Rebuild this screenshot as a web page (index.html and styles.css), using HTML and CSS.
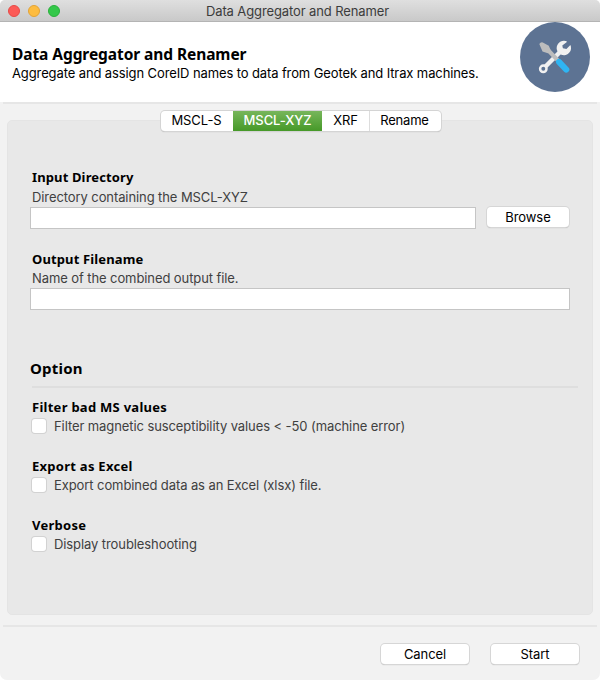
FILE: index.html
```html
<!DOCTYPE html>
<html lang="en">
<head>
<meta charset="utf-8">
<title>Data Aggregator and Renamer</title>
<link rel="stylesheet" href="styles.css">
</head>
<body>
<div class="window">
  <div class="titlebar">
    <div class="lights"><i class="light red"></i><i class="light yellow"></i><i class="light green"></i></div>
    <span class="window-title">Data Aggregator and Renamer</span>
  </div>
  <header class="header">
    <div class="header-text">
      <h1>Data Aggregator and Renamer</h1>
      <p class="subtitle">Aggregate and assign CoreID names to data from Geotek and Itrax machines.</p>
    </div>
    <svg class="logo" width="70" height="70" viewBox="0 0 70 70">
      <circle cx="35" cy="35" r="35" fill="#5d7393"/>
      <path d="M25 45L43 27" stroke="#f1f1f1" stroke-width="4.4"/>
      <circle cx="23.3" cy="46.8" r="3.2" fill="none" stroke="#f1f1f1" stroke-width="2.5"/>
      <path d="M47.2 19.7A7.2 7.2 0 1 0 50.4 23.1L46.4 27.1L42.9 26.2L42.3 23.5Z" fill="#f1f1f1"/>
      <path d="M27 27L38 38.5" stroke="#bdbdbd" stroke-width="4"/>
      <path d="M19.3 22Q20.5 19.8 22.8 20.4L28.8 23.8L30.8 28.4L27.8 31.2L22.5 29.6Z" fill="#bdbdbd"/>
      <path d="M39.2 40.2L46.3 47.6" stroke="#2fb5f3" stroke-width="6" stroke-linecap="round"/>
      <path d="M35.8 39L38.4 36.4L41.6 38.2L37.5 42.2Z" fill="#2fb5f3"/>
    </svg>
  </header>
  <div class="rule"></div>
  <main class="content">
    <nav class="tabs">
      <div class="tab t1">MSCL-S</div><div class="tab t2 active">MSCL-XYZ</div><div class="tab t3">XRF</div><div class="tab t4">Rename</div>
    </nav>
    <section class="panel">
      <div class="field">
        <h3>Input Directory</h3>
        <p>Directory containing the MSCL-XYZ</p>
        <div class="row"><input class="text" type="text"><button class="browse">Browse</button></div>
      </div>
      <div class="field output">
        <h3>Output Filename</h3>
        <p>Name of the combined output file.</p>
        <div class="row"><input class="text" type="text"></div>
      </div>
      <h2>Option</h2>
      <hr>
      <div class="option">
        <h3 class="wide">Filter bad MS values</h3>
        <label><i class="check"></i><span>Filter magnetic susceptibility values &lt; -50 (machine error)</span></label>
      </div>
      <div class="option">
        <h3 class="wide">Export as Excel</h3>
        <label><i class="check"></i><span>Export combined data as an Excel (xlsx) file.</span></label>
      </div>
      <div class="option">
        <h3 class="wide">Verbose</h3>
        <label><i class="check"></i><span>Display troubleshooting</span></label>
      </div>
    </section>
  </main>
  <div class="rule"></div>
  <footer class="footer"><button>Cancel</button><button>Start</button></footer>
</div>
</body>
</html>
```
FILE: styles.css
```css
* { box-sizing: border-box; }
body { margin: 0; background: #fff; font-family: Inter, sans-serif; font-size: 13px; letter-spacing: -0.09px; color: #000; }
h1, h2, h3, p { margin: 0; white-space: nowrap; }
h1, h2, h3 { font-family: "Noto Sans", sans-serif; font-weight: 700; }
.window { width: 600px; height: 680px; background: #f2f2f2; border-radius: 5px 5px 7px 7px; overflow: hidden; }
.titlebar { height: 22px; display: grid; grid-template-columns: 72px 1fr 77px; align-items: center; background: linear-gradient(#dfdfdf, #c9c9c9); border-bottom: 1px solid #b4b4b4; }
.lights { display: flex; gap: 8px; padding-left: 8px; }
.light { width: 12px; height: 12px; border-radius: 50%; border: 1px solid; }
.red { background: #fc5b57; border-color: #e64a46; }
.yellow { background: #fdbc40; border-color: #e2a336; }
.green { background: #34c84a; border-color: #29b03b; }
.window-title { text-align: center; color: #3c3c3c; line-height: 20px; letter-spacing: -0.11px; }
.header { height: 80px; display: flex; justify-content: space-between; background: #fff; padding: 0 10px 0 12px; }
.header-text { padding-top: 21px; }
h1 { font-size: 15.5px; line-height: 22px; letter-spacing: -0.08px; }
.subtitle { line-height: 16px; letter-spacing: -0.11px; }
.logo { display: block; }
.rule { height: 2px; margin: 0 3px; background: #e6e6e6; }
.content { padding: 7px 7px 10px; height: 521px; }
.tabs { position: relative; display: flex; width: 280px; height: 20px; margin: 0 0 0 154px; background: #fff; border-radius: 4px; box-shadow: 0 0 0 1px #d4d4d4, 0 1px 1px #aaa; overflow: hidden; }
.tab { line-height: 19px; text-align: center; }
.t1 { width: 72px; padding-right: 1px; }
.t2 { width: 89px; }
.t3 { width: 48px; border-right: 1px solid #ddd; }
.t4 { width: 71px; padding-right: 2px; letter-spacing: -0.2px; }
.tab.active { color: #fff; font-weight: 500; background: linear-gradient(#77b65b, #469928); }
.panel { height: 495px; margin-top: -11px; padding: 47px 14px 0 22px; background: #e8e8e8; border: 1px solid #e4e4e4; border-radius: 5px; }
h3 { font-size: 13px; line-height: 19px; padding-left: 2px; letter-spacing: 0.13px; }
h3.wide { letter-spacing: 0.27px; }
.field p { color: #404040; line-height: 20px; padding-left: 2px; }
.row { display: flex; gap: 11px; padding-right: 8px; }
.text { flex: 1; min-width: 0; height: 22px; padding: 0 4px; margin: 0; border: 1px solid #c5c5c5; background: #fff; }
button { width: 88px; height: 20px; padding: 0; border: 0; border-radius: 4px; background: #fff; box-shadow: 0 0 0 1px #d6d6d6, 0 1px 1px #aaa; font: 13px/20px Inter, sans-serif; letter-spacing: -0.09px; color: #000; }
.browse { width: 82px; margin: 0 1px 0 0; }
.output { margin-top: 21px; }
.output p { line-height: 19px; }
h2 { font-size: 15px; line-height: 20px; margin: 48px 0 0; height: 28px; letter-spacing: 0.2px; }
hr { height: 2px; margin: 0 0 0 2px; border: 0; background: #dedede; }
.option { height: 59px; padding-top: 10px; }
label { display: flex; align-items: center; gap: 8px; height: 18px; color: #404040; white-space: nowrap; padding-left: 2px; }
.check { width: 14px; height: 14px; background: #fff; border-radius: 3px; box-shadow: 0 0 0 1px #d2d2d2; }
.footer { display: flex; justify-content: flex-end; gap: 22px; padding: 17px 21px 0; }
```
